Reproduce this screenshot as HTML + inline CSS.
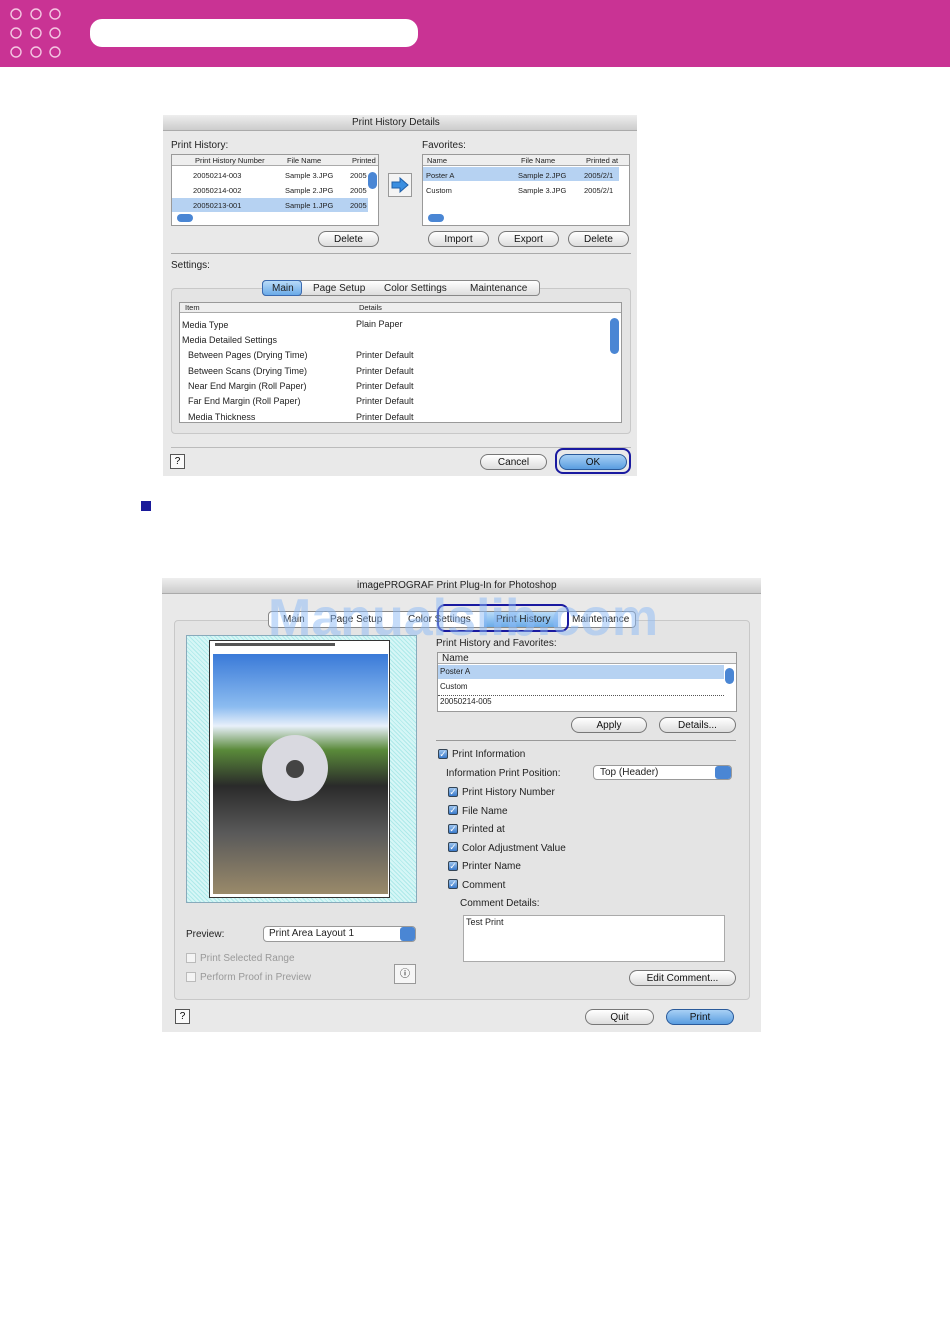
<!DOCTYPE html>
<html><head><meta charset="utf-8"><style>
*{margin:0;padding:0;box-sizing:border-box}
body{width:950px;height:1344px;background:#fff;position:relative;font-family:"Liberation Sans",sans-serif;overflow:hidden}
.a{position:absolute}
.t{position:absolute;font-size:10px;color:#222;white-space:nowrap}
.s{font-size:7.5px}
.btn{position:absolute;height:16px;border:1px solid #777;border-radius:9px;background:linear-gradient(#fff,#ddd);font-size:10px;text-align:center;line-height:15px;color:#111}
.blue{background:linear-gradient(#a8d0f5,#5a9de0);border-color:#2a5a9a}
.list{position:absolute;background:#fff;border:1px solid #999}
.sel{background:#b6d2f2}
.cb{position:absolute;width:10px;height:10px;border:1px solid #345;background:linear-gradient(#9cc4ee,#3a7acb);border-radius:2px;color:#fff;font-size:9px;line-height:8px;text-align:center}
.grp{position:absolute;border:1px solid #c8c8c8;border-radius:4px;background:#e4e4e4}
</style></head><body>
<div class="a" style="left:0;top:0;width:950px;height:67px;background:#c93394"></div>
<svg class="a" style="left:0;top:0" width="80" height="67"><g fill="none" stroke="#f4c6e2" stroke-width="1.4">
<circle cx="16" cy="14" r="5"/><circle cx="36" cy="14" r="5"/><circle cx="55" cy="14" r="5"/>
<circle cx="16" cy="33" r="5"/><circle cx="36" cy="33" r="5"/><circle cx="55" cy="33" r="5"/>
<circle cx="16" cy="52" r="5"/><circle cx="36" cy="52" r="5"/><circle cx="55" cy="52" r="5"/></g></svg>
<div class="a" style="left:90px;top:19px;width:328px;height:28px;background:#fff;border-radius:12px"></div>

<!-- Dialog 1 -->
<div class="a" style="left:163px;top:115px;width:474px;height:361px;background:#e9e9e9"></div>
<div class="a" style="left:163px;top:115px;width:474px;height:16px;background:linear-gradient(#eee,#ccc);border-bottom:1px solid #aaa"></div>
<div class="t" style="left:352px;top:117px">Print History Details</div>
<div class="t" style="left:171px;top:140px">Print History:</div>
<div class="t" style="left:422px;top:140px">Favorites:</div>
<div class="list" style="left:171px;top:154px;width:208px;height:72px"></div>
<div class="a" style="left:172px;top:155px;width:206px;height:11px;background:#eee;border-bottom:1px solid #aaa"></div>
<div class="t s" style="left:195px;top:156px">Print History Number</div>
<div class="t s" style="left:287px;top:156px">File Name</div>
<div class="t s" style="left:352px;top:156px">Printed</div>
<div class="t s" style="left:193px;top:171px">20050214-003</div><div class="t s" style="left:285px;top:171px">Sample 3.JPG</div><div class="t s" style="left:350px;top:171px">2005</div>
<div class="t s" style="left:193px;top:186px">20050214-002</div><div class="t s" style="left:285px;top:186px">Sample 2.JPG</div><div class="t s" style="left:350px;top:186px">2005</div>
<div class="a sel" style="left:172px;top:198px;width:196px;height:14px"></div>
<div class="t s" style="left:193px;top:201px">20050213-001</div><div class="t s" style="left:285px;top:201px">Sample 1.JPG</div><div class="t s" style="left:350px;top:201px">2005</div>
<div class="a" style="left:368px;top:172px;width:9px;height:17px;background:#4a86d4;border-radius:5px"></div>
<div class="a" style="left:177px;top:214px;width:16px;height:8px;background:#4a86d4;border-radius:5px"></div>
<div class="a" style="left:388px;top:173px;width:24px;height:24px;border:1px solid #999;background:#f4f4f4"></div>
<svg class="a" style="left:391px;top:177px" width="18" height="16"><path d="M1 5h8V1l8 7-8 7v-4H1z" fill="#3a8ee0" stroke="#1f5fa8"/></svg>
<div class="list" style="left:422px;top:154px;width:208px;height:72px"></div>
<div class="a" style="left:423px;top:155px;width:206px;height:11px;background:#eee;border-bottom:1px solid #aaa"></div>
<div class="t s" style="left:427px;top:156px">Name</div><div class="t s" style="left:521px;top:156px">File Name</div><div class="t s" style="left:586px;top:156px">Printed at</div>
<div class="a sel" style="left:423px;top:167px;width:196px;height:14px"></div>
<div class="t s" style="left:426px;top:171px">Poster A</div><div class="t s" style="left:518px;top:171px">Sample 2.JPG</div><div class="t s" style="left:584px;top:171px">2005/2/1</div>
<div class="t s" style="left:426px;top:186px">Custom</div><div class="t s" style="left:518px;top:186px">Sample 3.JPG</div><div class="t s" style="left:584px;top:186px">2005/2/1</div>
<div class="a" style="left:428px;top:214px;width:16px;height:8px;background:#4a86d4;border-radius:5px"></div>
<div class="btn" style="left:318px;top:231px;width:61px">Delete</div>
<div class="btn" style="left:428px;top:231px;width:61px">Import</div>
<div class="btn" style="left:498px;top:231px;width:61px">Export</div>
<div class="btn" style="left:568px;top:231px;width:61px">Delete</div>
<div class="a" style="left:171px;top:253px;width:460px;height:1px;background:#aaa"></div>
<div class="t" style="left:171px;top:260px">Settings:</div>
<div class="grp" style="left:171px;top:288px;width:460px;height:146px"></div>
<div class="a" style="left:262px;top:280px;width:278px;height:16px;border:1px solid #888;border-radius:4px;background:linear-gradient(#fff,#ddd)"></div>
<div class="a" style="left:262px;top:280px;width:40px;height:16px;border:1px solid #3a6ab0;border-radius:4px;background:linear-gradient(#b9dbf8,#6aaae8)"></div>
<div class="t" style="left:272px;top:283px">Main</div><div class="t" style="left:313px;top:283px">Page Setup</div><div class="t" style="left:384px;top:283px">Color Settings</div><div class="t" style="left:470px;top:283px">Maintenance</div>
<div class="list" style="left:179px;top:302px;width:443px;height:121px"></div>
<div class="a" style="left:180px;top:303px;width:441px;height:10px;background:#eee;border-bottom:1px solid #aaa"></div>
<div class="t s" style="left:185px;top:303px">Item</div><div class="t s" style="left:359px;top:303px">Details</div>
<div class="t s" style="left:182px;top:320px;font-size:9px">Media Type</div><div class="t" style="left:356px;top:319px;font-size:9px">Plain Paper</div>
<div class="t" style="left:182px;top:335px;font-size:9px">Media Detailed Settings</div>
<div class="t" style="left:188px;top:350px;font-size:9px">Between Pages (Drying Time)</div><div class="t" style="left:356px;top:350px;font-size:9px">Printer Default</div>
<div class="t" style="left:188px;top:366px;font-size:9px">Between Scans (Drying Time)</div><div class="t" style="left:356px;top:366px;font-size:9px">Printer Default</div>
<div class="t" style="left:188px;top:381px;font-size:9px">Near End Margin (Roll Paper)</div><div class="t" style="left:356px;top:381px;font-size:9px">Printer Default</div>
<div class="t" style="left:188px;top:396px;font-size:9px">Far End Margin (Roll Paper)</div><div class="t" style="left:356px;top:396px;font-size:9px">Printer Default</div>
<div class="t" style="left:188px;top:412px;font-size:9px">Media Thickness</div><div class="t" style="left:356px;top:412px;font-size:9px">Printer Default</div>
<div class="a" style="left:610px;top:318px;width:9px;height:36px;background:#4a86d4;border-radius:5px"></div>
<div class="a" style="left:171px;top:447px;width:460px;height:1px;background:#bbb"></div>
<div class="a" style="left:170px;top:454px;width:15px;height:15px;border:1px solid #555;background:#fafafa;font-size:10px;text-align:center;line-height:13px">?</div>
<div class="btn" style="left:480px;top:454px;width:67px">Cancel</div>
<div class="a" style="left:555px;top:448px;width:76px;height:26px;border:2px solid #1a1aa0;border-radius:8px"></div>
<div class="btn blue" style="left:559px;top:454px;width:68px">OK</div>

<div class="a" style="left:141px;top:501px;width:10px;height:10px;background:#1a1a9a"></div>

<!-- Dialog 2 -->
<div class="a" style="left:162px;top:578px;width:599px;height:454px;background:#e9e9e9"></div>
<div class="a" style="left:162px;top:578px;width:599px;height:16px;background:linear-gradient(#eee,#ccc);border-bottom:1px solid #aaa"></div>
<div class="t" style="left:357px;top:580px">imagePROGRAF Print Plug-In for Photoshop</div>
<div class="grp" style="left:174px;top:620px;width:576px;height:380px"></div>
<div class="a" style="left:268px;top:611px;width:368px;height:17px;border:1px solid #888;border-radius:4px;background:#fff"></div>
<div class="a" style="left:484px;top:612px;width:74px;height:15px;background:linear-gradient(#b9dbf8,#6aaae8)"></div>
<div class="a" style="left:437px;top:604px;width:132px;height:28px;border:2px solid #1a1aa0;border-radius:8px"></div>
<div class="t" style="left:283px;top:614px">Main</div><div class="t" style="left:330px;top:614px">Page Setup</div><div class="t" style="left:408px;top:614px">Color Settings</div><div class="t" style="left:496px;top:614px">Print History</div><div class="t" style="left:572px;top:614px">Maintenance</div>
<div class="t" style="left:268px;top:588px;font-size:52px;font-weight:bold;color:rgba(140,185,245,.5)">Manualslib.com</div>
<div class="a" style="left:186px;top:635px;width:231px;height:268px;background:repeating-linear-gradient(45deg,#aeeaea 0 1px,#d6f6f6 1px 3px);border:1px solid #8ab"></div>
<div class="a" style="left:209px;top:640px;width:181px;height:258px;background:#fff;border:1px solid #333"></div>
<div class="a" style="left:215px;top:643px;width:120px;height:3px;background:#555"></div>
<div class="a" style="left:213px;top:654px;width:175px;height:240px;background:linear-gradient(#3a7ad8 0%,#8cbcf0 22%,#e8f0fa 30%,#5a8a3a 40%,#2a2a2a 55%,#5a5a5a 75%,#9a8a6a 100%)"></div>
<div class="a" style="left:262px;top:735px;width:66px;height:66px;border-radius:50%;background:#d9d9e0"></div>
<div class="a" style="left:286px;top:760px;width:18px;height:18px;border-radius:50%;background:#444"></div>
<div class="t" style="left:436px;top:638px">Print History and Favorites:</div>
<div class="list" style="left:437px;top:652px;width:300px;height:60px"></div>
<div class="a" style="left:438px;top:653px;width:298px;height:11px;background:#eee;border-bottom:1px solid #aaa"></div>
<div class="t" style="left:442px;top:653px">Name</div>
<div class="a sel" style="left:438px;top:665px;width:286px;height:14px"></div>
<div class="t s" style="left:440px;top:667px;font-size:8px">Poster A</div>
<div class="t s" style="left:440px;top:682px;font-size:8px">Custom</div>
<div class="a" style="left:438px;top:695px;width:286px;border-top:1px dotted #555"></div>
<div class="t s" style="left:440px;top:697px;font-size:8px">20050214-005</div>
<div class="a" style="left:725px;top:668px;width:9px;height:16px;background:#4a86d4;border-radius:5px"></div>
<div class="btn" style="left:571px;top:717px;width:76px">Apply</div>
<div class="btn" style="left:659px;top:717px;width:77px">Details...</div>
<div class="a" style="left:436px;top:740px;width:300px;height:1px;background:#999"></div>
<div class="cb" style="left:438px;top:749px">✓</div><div class="t" style="left:452px;top:749px">Print Information</div>
<div class="t" style="left:446px;top:768px">Information Print Position:</div>
<div class="a" style="left:593px;top:765px;width:139px;height:15px;border:1px solid #999;border-radius:4px;background:#fff"></div>
<div class="a" style="left:715px;top:766px;width:16px;height:13px;background:#4a86d4;border-radius:3px"></div>
<div class="t" style="left:600px;top:767px">Top (Header)</div>
<div class="cb" style="left:448px;top:787px">✓</div><div class="t" style="left:462px;top:787px">Print History Number</div>
<div class="cb" style="left:448px;top:805px">✓</div><div class="t" style="left:462px;top:806px">File Name</div>
<div class="cb" style="left:448px;top:824px">✓</div><div class="t" style="left:462px;top:824px">Printed at</div>
<div class="cb" style="left:448px;top:842px">✓</div><div class="t" style="left:462px;top:843px">Color Adjustment Value</div>
<div class="cb" style="left:448px;top:861px">✓</div><div class="t" style="left:462px;top:861px">Printer Name</div>
<div class="cb" style="left:448px;top:879px">✓</div><div class="t" style="left:462px;top:880px">Comment</div>
<div class="t" style="left:460px;top:898px">Comment Details:</div>
<div class="a" style="left:463px;top:915px;width:262px;height:47px;background:#fff;border:1px solid #aaa"></div>
<div class="t" style="left:466px;top:917px;font-size:9px">Test Print</div>
<div class="btn" style="left:629px;top:970px;width:107px">Edit Comment...</div>
<div class="t" style="left:186px;top:929px">Preview:</div>
<div class="a" style="left:263px;top:926px;width:153px;height:16px;border:1px solid #999;border-radius:4px;background:#fff"></div>
<div class="a" style="left:400px;top:927px;width:15px;height:14px;background:#4a86d4;border-radius:3px"></div>
<div class="t" style="left:269px;top:928px">Print Area Layout 1</div>
<div class="a" style="left:186px;top:953px;width:10px;height:10px;border:1px solid #bbb;background:#f4f4f4"></div><div class="t" style="left:200px;top:953px;color:#999">Print Selected Range</div>
<div class="a" style="left:186px;top:972px;width:10px;height:10px;border:1px solid #bbb;background:#f4f4f4"></div><div class="t" style="left:200px;top:972px;color:#999">Perform Proof in Preview</div>
<div class="a" style="left:394px;top:964px;width:22px;height:20px;border:1px solid #999;background:#f6f6f6;font-size:10px;text-align:center">ⓘ</div>
<div class="a" style="left:175px;top:1009px;width:15px;height:15px;border:1px solid #555;background:#fafafa;font-size:10px;text-align:center;line-height:13px">?</div>
<div class="btn" style="left:585px;top:1009px;width:69px">Quit</div>
<div class="btn blue" style="left:666px;top:1009px;width:68px">Print</div>
</body></html>
